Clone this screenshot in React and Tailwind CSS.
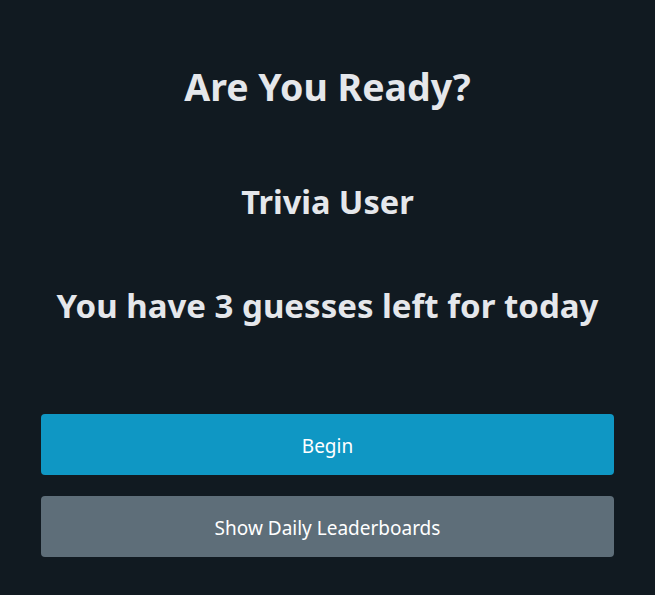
export default function App() {
  return (
    <div className="min-h-[595px] w-full bg-[#111a21] text-[#e5e7eb] px-[41px]" style={{ fontFamily: '"Noto Sans", sans-serif' }}>
      <div className="flex flex-col items-center">
        <h1 className="mt-[63px] text-[37.5px] leading-[48px] font-bold">Are You Ready?</h1>
        <h2 className="mt-[71px] text-[32.5px] leading-[40px] font-bold">Trivia User</h2>
        <h2 className="mt-[62px] text-[33px] leading-[44px] font-bold">You have 3 guesses left for today</h2>
      </div>
      <div className="mt-[86px] flex flex-col gap-[21px]">
        <button className="h-[61px] w-full rounded-[4px] bg-[#0f97c4] pt-[3px] text-white text-[19px]">Begin</button>
        <button className="h-[61px] w-full rounded-[4px] bg-[#5e6e79] pt-[3px] text-white text-[19px]">Show Daily Leaderboards</button>
      </div>
    </div>
  );
}
